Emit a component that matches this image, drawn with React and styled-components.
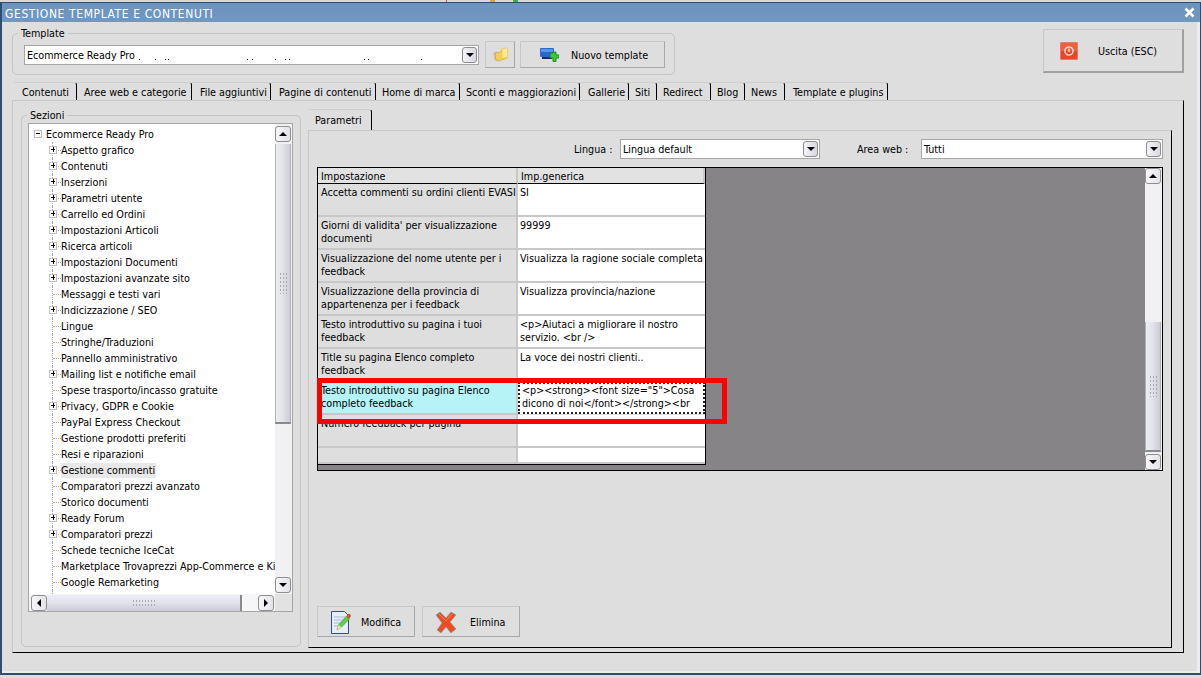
import React from "react";
import styled, { createGlobalStyle, css } from "styled-components";

const Global = createGlobalStyle`
  html, body { margin: 0; padding: 0; background: #dedede; overflow: hidden; }
  body { width: 1201px; height: 678px; font: 10.7px/13px "DejaVu Sans Condensed", "DejaVu Sans", sans-serif; font-stretch: condensed; color: #000; }
  * { box-sizing: border-box; }
`;

const Page = styled.div`display:flex;flex-direction:column;width:1201px;height:678px;background:#dedede;`;
const Behind = styled.div`height:2px;background:#d9d9d9;display:flex;padding-left:146px;gap:3px;`;
const BehindBit = styled.span`width:${p=>p.$w}px;margin-left:${p=>p.$m||0}px;background:${p=>p.$c};`;
const Win = styled.div`width:1201px;height:673px;display:flex;flex-direction:column;border:1px solid #2e4e6e;border-width:1px 1px 2px 2px;background:#dedede;box-shadow:inset -3px -2px 0 #ececec;`;
const Title = styled.div`height:19px;flex:none;display:flex;align-items:center;justify-content:space-between;padding:3px 5px 0 3px;background:linear-gradient(#6c93bf,#7098c0);color:#fff;font-size:12px;font-weight:400;letter-spacing:.6px;`;
const Close = styled.span`width:11px;height:11px;display:flex;margin-top:-3px;`;
const Body = styled.div`flex:1;display:flex;flex-direction:column;padding-left:10px;min-height:0;`;
const Head = styled.div`height:60px;flex:none;display:flex;align-items:flex-start;`;

const Group = styled.fieldset`
  margin:0;min-width:0;border:1px solid #c4c4c4;border-radius:5px;
  width:${p=>p.$w}px;height:${p=>p.$h}px;margin-top:${p=>p.$t||0}px;
  padding:${p=>p.$pad};display:flex;
`;
const Legend = styled.legend`padding:0 3px;margin-left:${p=>p.$m}px;line-height:13px;height:13px;`;

const Combo = styled.div`
  width:${p=>p.$w}px;height:20px;background:#fff;border:1px solid #a6a6a6;display:flex;align-items:center;
  justify-content:space-between;padding:0 1px 0 2px;position:relative;margin-top:${p=>p.$t||0}px;
`;
const DropBtn = styled.span`width:15px;height:16px;flex:none;border:1px solid #8c8c8c;border-radius:3px;background:linear-gradient(90deg,#f4f4f8,#d8d8e0);display:flex;align-items:center;justify-content:center;`;

const Arrow = styled.i`
  display:block;width:0;height:0;border-style:solid;
  ${p=>p.$d==="down"&&css`border-width:4px 4px 0;border-color:#000 transparent transparent;`}
  ${p=>p.$d==="up"&&css`border-width:0 4px 4px;border-color:transparent transparent #000;`}
  ${p=>p.$d==="left"&&css`border-width:4px 4px 4px 0;border-color:transparent #000 transparent transparent;`}
  ${p=>p.$d==="right"&&css`border-width:4px 0 4px 4px;border-color:transparent transparent transparent #000;`}
`;

const Btn = styled.button`
  font:inherit;font-stretch:inherit;color:#000;background:#dedede;border:1px solid #c8c8c8;border-right-color:#a8a8a8;border-bottom-color:#a8a8a8;
  width:${p=>p.$w}px;height:${p=>p.$h}px;margin-left:${p=>p.$l||0}px;margin-top:${p=>p.$t||0}px;flex:none;
  display:flex;align-items:center;padding:1px 0 0 ${p=>p.$pl||0}px;gap:${p=>p.$g||0}px;
`;
const ExitBtn = styled(Btn)`margin-top:7px;margin-left:auto;margin-right:16px;border-color:#c8c8c8 #a0a0a0 #a0a0a0 #c8c8c8;border-width:1px 2px 2px 1px;`;

const Tabs = styled.div`height:18px;flex:none;display:flex;padding-left:${p=>p.$l||0}px;`;
const Tab = styled.div`
  width:${p=>p.$w}px;height:100%;padding:1px 0 0 ${p=>p.$p}px;display:flex;align-items:center;white-space:nowrap;
  border-top:1px solid #cfcfcf;border-right:1px solid #000;border-radius:0 3px 0 0;
`;
const Panel = styled.div`
  width:1172px;height:553px;flex:none;border:1px solid #c8c8c8;border-right-color:#000;border-bottom-color:#000;display:flex;padding-left:8px;align-items:flex-start;
`;
const Left = styled(Group)`margin-top:8px;`;
const Tree = styled.div`width:265px;height:489px;flex:none;border:1px solid #a6a6a6;background:#fff;display:grid;grid-template-columns:1fr 17px;grid-template-rows:1fr 17px;`;
const TreeView = styled.div`overflow:hidden;padding-top:2px;position:relative;`;
const Row = styled.div`
  height:16px;display:flex;align-items:center;white-space:nowrap;padding-left:${p=>p.$root?17:32}px;position:relative;
`;
const RowText = styled.span`background:${p=>p.$sel?"#e8e8e8":"transparent"};padding:1px 1px 0 0;line-height:14px;`;
const Conn = styled.span`
  position:absolute;left:${p=>p.$root?8:23}px;top:0;height:${p=>p.$last?"8px":"16px"};border-left:1px dotted #aaa;
  &::after{content:"";position:absolute;left:0;top:8px;width:8px;border-top:1px dotted #aaa;}
`;
const Exp = styled.span`
  position:absolute;left:${p=>p.$root?5:20}px;top:4px;width:8px;height:8px;background:#fff;border:1px solid #bdbdbd;
  &::before{content:"";position:absolute;left:1px;top:2px;width:4px;height:1px;background:#000;}
  ${p=>!p.$open&&css`&::after{content:"";position:absolute;left:2.5px;top:0;width:1px;height:5px;background:#000;}`}
`;

const VBar = styled.div`width:17px;display:flex;flex-direction:column;background:#f1f1f4;padding:${p=>p.$t||0}px 0 ${p=>p.$b||0}px;flex:none;`;
const HBar = styled.div`height:17px;display:flex;align-items:center;background:#f6f6f8;padding-left:2px;`;
const SBtn = styled.span`width:16px;height:16px;flex:none;border:1px solid #8f8f8f;border-radius:3px;background:linear-gradient(90deg,#f7f7fa,#e2e2e8);display:flex;align-items:center;justify-content:center;`;
const VTrack = styled.div`flex:1;min-height:0;`;
const Grip = styled.span`
  background-image:radial-gradient(#aaa 0.8px,transparent 1px);background-size:3px 4px;
  width:${p=>p.$w}px;height:${p=>p.$h}px;display:block;
`;
const VThumb = styled.div`
  height:${p=>p.$s}px;margin-top:${p=>p.$o}px;width:16px;background:linear-gradient(90deg,#ececf4,#e3e3ec 45%,#ccccd6);border:1px solid #b0b0b8;border-width:0 1px 2px;border-bottom-color:#8a8a8a;
  display:flex;align-items:center;justify-content:center;
`;
const HThumb = styled.div`
  width:${p=>p.$s}px;height:16px;margin-right:${p=>p.$r}px;background:linear-gradient(#ececf4,#e3e3ec 45%,#ccccd6);border-right:2px solid #8a8a8a;
  display:flex;align-items:center;justify-content:center;
`;
const Corner = styled.div`background:#e2e2e2;`;

const Right = styled.div`width:864px;margin-left:7px;display:flex;flex-direction:column;margin-top:8px;`;
const SubTabs = styled(Tabs)`height:21px;padding-left:1px;`;
const Inner = styled.div`height:518px;border:1px solid #c8c8c8;border-right-color:#000;border-bottom-color:#000;padding:8px 8px 0;display:flex;flex-direction:column;`;
const Filters = styled.div`height:20px;display:flex;align-items:center;flex:none;`;
const FilterLabel = styled.span`margin-left:${p=>p.$l}px;width:${p=>p.$w}px;`;
const GridBox = styled.div`margin-top:8px;height:304px;width:846px;flex:none;display:flex;border:1px solid #000;background:#868486;position:relative;`;
const Table = styled.div`width:388px;height:297px;flex:none;background:#dedede;border-right:1px solid #000;border-bottom:1px solid #000;display:grid;grid-template-columns:200px 187px;grid-template-rows:16px repeat(6,33px) 33px 33px 16px;`;
const Filler = styled.div`flex:1;`;
const HeadCell = styled.div`background:#e2e2e2;border-right:2px solid #c8c8c8;border-bottom:1px solid #000;padding:2px 3px 0;line-height:13px;white-space:nowrap;`;
const Cell = styled.div`
  padding:2px 0 0 ${p=>p.$val?2:3}px;line-height:13px;overflow:hidden;
  background:${p=>p.$val?"#fff":"#dedede"};border-bottom:2px solid #c8c8c8;
  ${p=>!p.$val&&css`border-right:2px solid #c8c8c8;`}
  ${p=>p.$sel&&css`background:#b5f3f6;`}
`;
const FocusCell = styled.div`background:#fff;border:2px dotted #222;padding:0 1px 0 2px;line-height:13px;overflow:hidden;margin-bottom:1px;`;
const RedBox = styled.div`position:absolute;left:-1px;top:210px;width:410px;height:46px;border:5px solid #f00;pointer-events:none;`;
const Actions = styled.div`display:flex;margin-top:135px;`;

const treeRows = [
  ["Aspetto grafico",1],["Contenuti",1],["Inserzioni",1],["Parametri utente",1],["Carrello ed Ordini",1],
  ["Impostazioni Articoli",1],["Ricerca articoli",1],["Impostazioni Documenti",1],["Impostazioni avanzate sito",1],
  ["Messaggi e testi vari",0],["Indicizzazione / SEO",1],["Lingue",0],["Stringhe/Traduzioni",0],["Pannello amministrativo",0],
  ["Mailing list e notifiche email",1],["Spese trasporto/incasso gratuite",0],["Privacy, GDPR e Cookie",1],
  ["PayPal Express Checkout",0],["Gestione prodotti preferiti",0],["Resi e riparazioni",0],["Gestione commenti",1,1],
  ["Comparatori prezzi avanzato",0],["Storico documenti",0],["Ready Forum",1],["Comparatori prezzi",1],
  ["Schede tecniche IceCat",0],["Marketplace Trovaprezzi App-Commerce e Kindle",0],["Google Remarketing",0],["Gestione sconti e regali",0],
];
const gridRows = [
  ["Accetta commenti su ordini clienti EVASI","SI"],
  ["Giorni di validita' per visualizzazione documenti","99999"],
  ["Visualizzazione del nome utente per i feedback","Visualizza la ragione sociale completa"],
  ["Visualizzazione della provincia di appartenenza per i feedback","Visualizza provincia/nazione"],
  ["Testo introduttivo su pagina i tuoi feedback","<p>Aiutaci a migliorare il nostro servizio. <br />"],
  ["Title su pagina Elenco completo feedback","La voce dei nostri clienti.."],
];
const topTabs = [
  ["Contenuti",63,8],["Aree web e categorie",115,7],["File aggiuntivi",79,8],["Pagine di contenuti",105,8],["Home di marca",84,6],
  ["Sconti e maggiorazioni",120,6],["Gallerie",49,8],["Siti",28,6],["Redirect",54,6],["Blog",34,6],["News",40,6],["Template e plugins",103,8],
];

const CloseIcon = () => (<svg width="11" height="11" viewBox="0 0 11 11"><path d="M1.5 1.5l8 8M9.5 1.5l-8 8" stroke="#fff" strokeWidth="2.6"/></svg>);
const FolderIcon = () => (
  <svg width="16" height="16" viewBox="0 0 16 16"><path d="M1 6l4-2 1 8-3 2z" fill="#c9b7e8"/><path d="M3 6l6-1 1-3 5-1v10l-9 3-2-1z" fill="#f6d24c" stroke="#c9a020" strokeWidth=".6"/><path d="M10 2l5-1v9l-4 1z" fill="#ffe98a"/></svg>
);
const NewIcon = () => (
  <svg width="19" height="15" viewBox="0 0 19 15"><rect x="0" y="0" width="14" height="9" rx="1" fill="#2a66d0"/><rect x="1" y="1" width="12" height="3" fill="#5b94ea"/><rect x="2" y="9" width="10" height="2" fill="#12306e"/><path d="M10 5h3V4h3v3h3v3h-3v3.500h-3V10h-3z" fill="#3cc83c" stroke="#137a13" strokeWidth=".8"/></svg>
);
const ExitIcon = () => (
  <svg width="18" height="18" viewBox="0 0 18 18"><rect width="18" height="18" fill="#e8452a" stroke="#d8d0c8" strokeWidth=".8"/><rect x="1" y="1" width="16" height="8" fill="#f0603f"/><circle cx="9" cy="9" r="4" fill="none" stroke="#ffd8c8" strokeWidth="1.600"/><rect x="8.300" y="6.500" width="1.400" height="3.500" fill="#ffe8e0"/></svg>
);
const EditIcon = () => (
  <svg width="21" height="23" viewBox="0 0 21 23"><path d="M.5.500h13l4 4v18H.500z" fill="#e6ecf8" stroke="#3a4a90"/><path d="M3 6h11M3 9h11M3 12h7M3 15h5" stroke="#aeb8d8"/><path d="M6 19l1.500-5L15.500 5l3 3-8.500 8.500z" fill="#62cc4c" stroke="#3c9a30" strokeWidth=".6"/><path d="M15.500 5l1.500-2h2l1 2-2 3z" fill="#d84a3a"/><path d="M6 19l1.500-5 3 2.500z" fill="#f4dfb0"/></svg>
);
const DelIcon = () => (
  <svg width="22" height="22" viewBox="0 0 22 22"><path d="M1 4l4-3 6 6 5-6 5 3-6 7 6 7-5 4-5-6-5 6-4-3 5-7z" fill="#f44a20" stroke="#3cb8c8" strokeWidth=".6"/><path d="M4 3l7 7 6-7" fill="none" stroke="#ff8a60" strokeWidth="1"/></svg>
);
const Redact = () => (
  <svg width="320" height="6" viewBox="0 0 320 6" style={{marginLeft:4,marginTop:8,flex:"none"}}>
    {[0,16,26,29,108,113,136,146,150,225,229,282].map(x=><rect key={x} x={x} y="3" width="1" height="1" fill="#000"/>)}
  </svg>
);
const ComboLeft = styled.span`display:flex;align-items:center;white-space:nowrap;overflow:hidden;`;

export default function App(){
  return (
    <Page>
      <Global/>
      <Behind>
        <BehindBit $w={1} $c="#b06060" $m={300}/><BehindBit $w={5} $c="#e0a040" $m={40}/><BehindBit $w={5} $c="#40b040" $m={15}/>
      </Behind>
      <Win>
        <Title>GESTIONE TEMPLATE E CONTENUTI<Close><CloseIcon/></Close></Title>
        <Body>
          <Head>
            <Group $w={663} $h={48} $t={5} $pad="0 9px 0 11px">
              <Legend $m={-6}>Template</Legend>
              <Combo $w={455} $t={5}>
                <ComboLeft>Ecommerce Ready Pro<Redact/></ComboLeft>
                <DropBtn><Arrow $d="down"/></DropBtn>
              </Combo>
              <Btn $w={30} $h={27} $l={6} $pl={6} $t={1}><FolderIcon/></Btn>
              <Btn $w={145} $h={27} $l={5} $pl={19} $g={12} $t={1}><NewIcon/>Nuovo template</Btn>
            </Group>
            <ExitBtn $w={141} $h={44} $pl={16} $g={20}><ExitIcon/>Uscita (ESC)</ExitBtn>
          </Head>
          <Tabs $l={2}>
            {topTabs.map(([t,w,p])=><Tab key={t} $w={w} $p={p}>{t}</Tab>)}
          </Tabs>
          <Panel>
            <Left $w={280} $h={538} $pad="1px 6px 0 6px">
              <Legend $m={-1}>Sezioni</Legend>
              <Tree>
                <TreeView>
                  <Row $root><Exp $root $open/>Ecommerce Ready Pro</Row>
                  {treeRows.map(([t,exp,sel])=>(
                    <Row key={t}><Conn/>{exp?<Exp/>:null}<RowText $sel={sel}>{t}</RowText></Row>
                  ))}
                </TreeView>
                <VBar $t={2} $b={1}>
                  <SBtn><Arrow $d="up"/></SBtn>
                  <VTrack><VThumb $o={2} $s={280}><Grip $w={9} $h={22}/></VThumb></VTrack>
                  <SBtn><Arrow $d="down"/></SBtn>
                </VBar>
                <HBar>
                  <SBtn><Arrow $d="left"/></SBtn>
                  <HThumb $s={195} $r={16}><Grip $w={24} $h={8}/></HThumb>
                  <SBtn><Arrow $d="right"/></SBtn>
                </HBar>
                <Corner/>
              </Tree>
            </Left>
            <Right>
              <SubTabs><Tab $w={63} $p={6}>Parametri</Tab></SubTabs>
              <Inner>
                <Filters>
                  <FilterLabel $l={257} $w={46}>Lingua :</FilterLabel>
                  <Combo $w={200}>Lingua default<DropBtn><Arrow $d="down"/></DropBtn></Combo>
                  <FilterLabel $l={37} $w={64}>Area web :</FilterLabel>
                  <Combo $w={242}>Tutti<DropBtn><Arrow $d="down"/></DropBtn></Combo>
                </Filters>
                <GridBox>
                  <Table>
                    <HeadCell>Impostazione</HeadCell><HeadCell>Imp.generica</HeadCell>
                    {gridRows.map(([a,b])=>(
                      <React.Fragment key={a}><Cell>{a}</Cell><Cell $val>{b}</Cell></React.Fragment>
                    ))}
                    <Cell $sel>Testo introduttivo su pagina Elenco completo feedback</Cell>
                    <FocusCell>{'<p><strong><font size="5">Cosa dicono di noi</font></strong><br'}</FocusCell>
                    <Cell>Numero feedback per pagina</Cell><Cell $val/>
                    <Cell/><Cell $val/>
                  </Table>
                  <Filler/>
                  <VBar>
                    <SBtn><Arrow $d="up"/></SBtn>
                    <VTrack><VThumb $o={138} $s={130}><Grip $w={9} $h={22}/></VThumb></VTrack>
                    <SBtn><Arrow $d="down"/></SBtn>
                  </VBar>
                  <RedBox/>
                </GridBox>
                <Actions>
                  <Btn $w={98} $h={31} $pl={13} $g={9}><EditIcon/>Modifica</Btn>
                  <Btn $w={98} $h={31} $l={7} $pl={12} $g={13}><DelIcon/>Elimina</Btn>
                </Actions>
              </Inner>
            </Right>
          </Panel>
        </Body>
      </Win>
    </Page>
  );
}
